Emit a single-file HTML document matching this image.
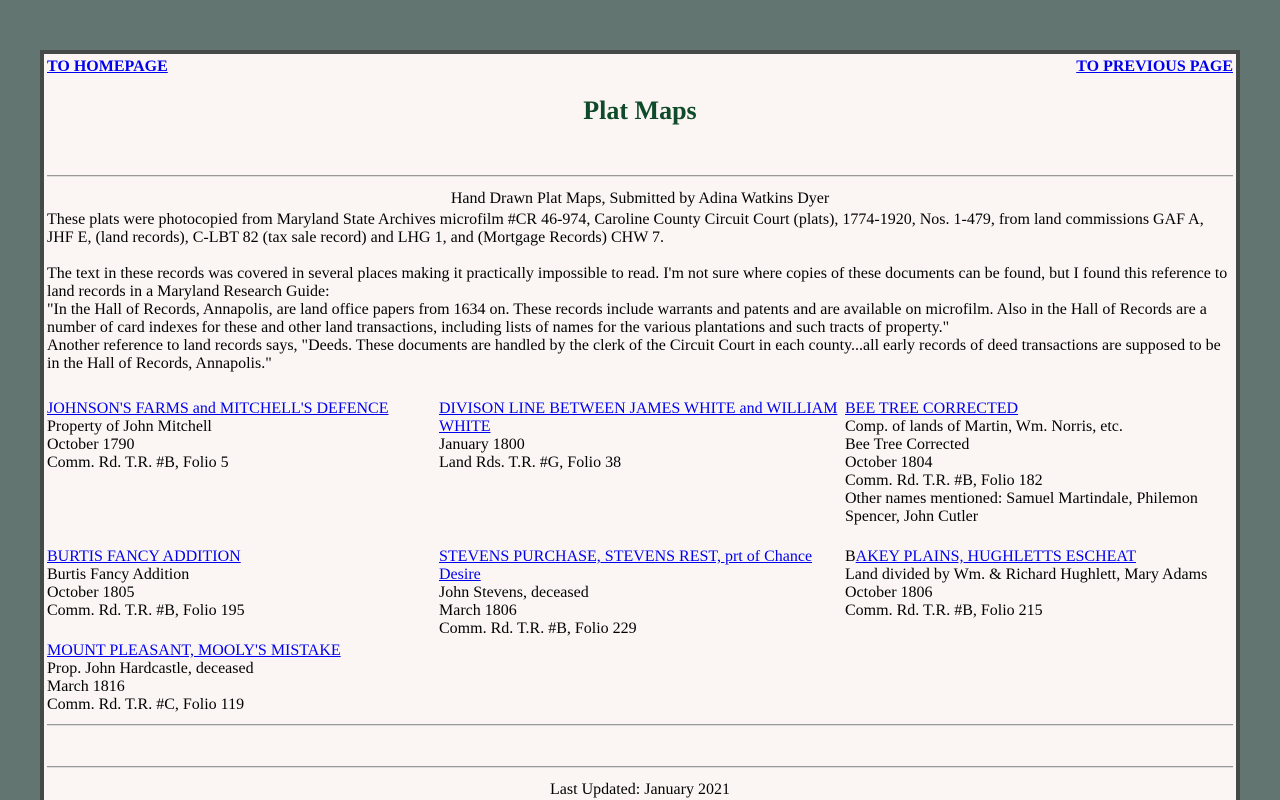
<!DOCTYPE html>
<html><head><meta charset="utf-8"><style>
html{overflow:hidden;height:800px}
body{margin:0;background:#637571;font-family:"Liberation Serif",serif;font-size:16px;line-height:18px;color:#000;width:1280px;height:800px;overflow:hidden;position:relative}
.box{position:absolute;left:40px;top:50px;width:1192px;height:746px;border:4px solid #454a48;border-bottom:none;background:#fbf6f3}
.a{position:absolute;white-space:nowrap}
a{color:#0000ee;text-decoration:underline}
.hr{position:absolute;left:47px;width:1186px;height:0;border-top:1px solid #999;border-bottom:1px solid #ddd}
.c{position:absolute;left:0;width:1280px;text-align:center}
</style></head><body>
<div class="box"></div>
<div class="a" style="left:47px;top:58px"><a href="#"><b>TO HOMEPAGE</b></a></div>
<div class="a" style="right:47px;top:58px"><a href="#"><b>TO PREVIOUS PAGE</b></a></div>
<div class="c" style="top:96px;font-size:26px;line-height:30px;font-weight:bold;color:#0f4a2a">Plat Maps</div>
<div class="hr" style="top:175px"></div>
<div class="c" style="top:190px">Hand Drawn Plat Maps, Submitted by Adina Watkins Dyer</div>
<div class="a" style="left:47px;top:211px;white-space:normal;width:1186px">These plats were photocopied from Maryland State Archives microfilm #CR 46-974, Caroline County Circuit Court (plats), 1774-1920, Nos. 1-479, from land commissions GAF A, JHF E, (land records), C-LBT 82 (tax sale record) and LHG 1, and (Mortgage Records) CHW 7.<br><br>The text in these records was covered in several places making it practically impossible to read. I'm not sure where copies of these documents can be found, but I found this reference to land records in a Maryland Research Guide:<br>"In the Hall of Records, Annapolis, are land office papers from 1634 on. These records include warrants and patents and are available on microfilm. Also in the Hall of Records are a number of card indexes for these and other land transactions, including lists of names for the various plantations and such tracts of property."<br>Another reference to land records says, "Deeds. These documents are handled by the clerk of the Circuit Court in each county...all early records of deed transactions are supposed to be in the Hall of Records, Annapolis."</div>

<div class="a" style="left:47px;top:400px"><a href="#">JOHNSON'S FARMS and MITCHELL'S DEFENCE</a><br>Property of John Mitchell<br>October 1790<br>Comm. Rd. T.R. #B, Folio 5</div>
<div class="a" style="left:439px;top:400px;white-space:normal;width:400px"><a href="#">DIVISON LINE BETWEEN JAMES WHITE and WILLIAM WHITE</a><br>January 1800<br>Land Rds. T.R. #G, Folio 38</div>
<div class="a" style="left:845px;top:400px;white-space:normal;width:388px"><a href="#">BEE TREE CORRECTED</a><br>Comp. of lands of Martin, Wm. Norris, etc.<br>Bee Tree Corrected<br>October 1804<br>Comm. Rd. T.R. #B, Folio 182<br>Other names mentioned: Samuel Martindale, Philemon Spencer, John Cutler</div>

<div class="a" style="left:47px;top:548px"><a href="#">BURTIS FANCY ADDITION</a><br>Burtis Fancy Addition<br>October 1805<br>Comm. Rd. T.R. #B, Folio 195</div>
<div class="a" style="left:439px;top:548px;white-space:normal;width:390px"><a href="#">STEVENS PURCHASE, STEVENS REST, prt of Chance Desire</a><br>John Stevens, deceased<br>March 1806<br>Comm. Rd. T.R. #B, Folio 229</div>
<div class="a" style="left:845px;top:548px">B<a href="#">AKEY PLAINS, HUGHLETTS ESCHEAT</a><br>Land divided by Wm. &amp; Richard Hughlett, Mary Adams<br>October 1806<br>Comm. Rd. T.R. #B, Folio 215</div>

<div class="a" style="left:47px;top:642px"><a href="#">MOUNT PLEASANT, MOOLY'S MISTAKE</a><br>Prop. John Hardcastle, deceased<br>March 1816<br>Comm. Rd. T.R. #C, Folio 119</div>
<div class="hr" style="top:724px"></div>
<div class="hr" style="top:766px"></div>
<div class="c" style="top:781px">Last Updated: January 2021</div>
</body></html>
